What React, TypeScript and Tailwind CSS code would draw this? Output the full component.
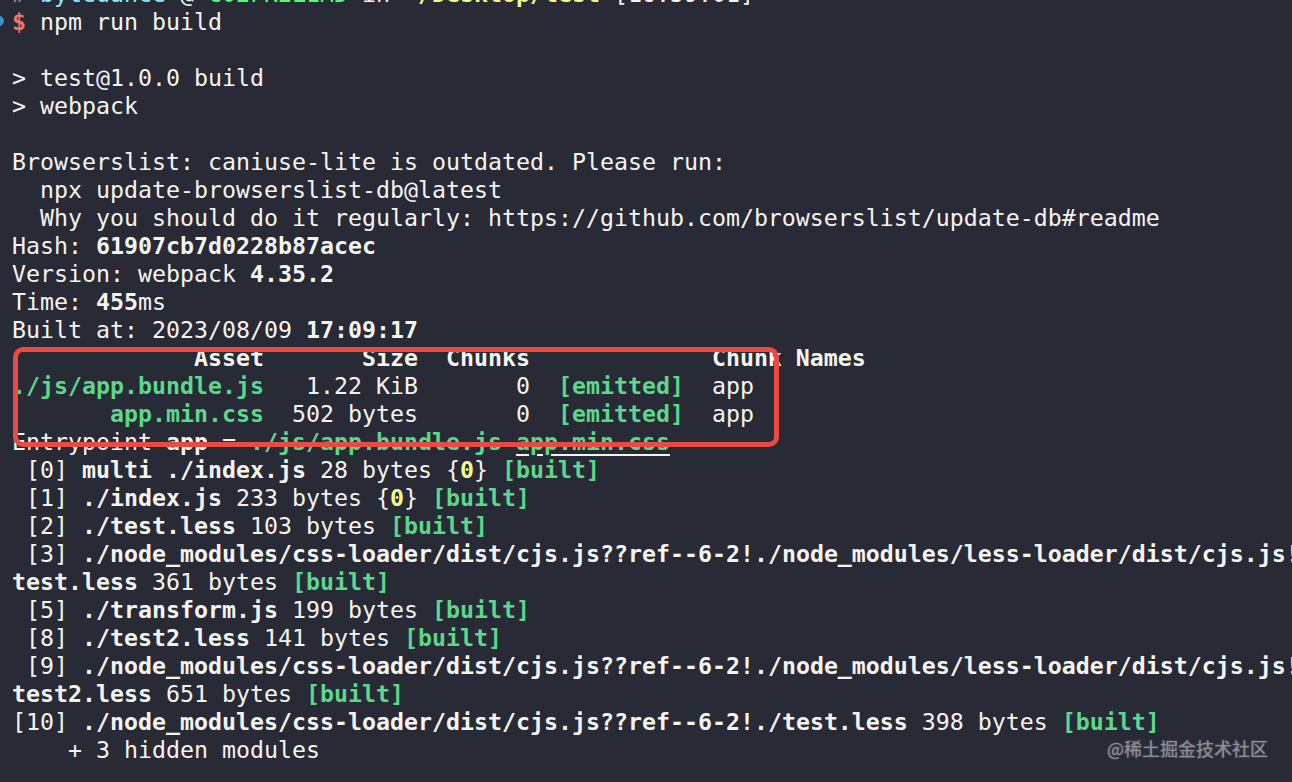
import type { ReactNode } from 'react';

// Terminal palette (close to Dracula)
const GREEN = 'font-bold text-[#5ad88b]';

function B({ children }: { children: ReactNode }) {
  return <span className="font-bold">{children}</span>;
}

function G({ children }: { children: ReactNode }) {
  return <span className={GREEN}>{children}</span>;
}

function Built() {
  return <G>[built]</G>;
}

function Chunk0() {
  return (
    <>
      {'{'}
      <span className="font-bold text-[#f1fa8c]">0</span>
      {'}'}
    </>
  );
}

const LINES: ReactNode[] = [
  <>
    <span className="text-[#8a8fa8]">#</span>{' '}
    <span className="text-[#8be9fd]">bytedance</span> @{' '}
    <span className="text-[#50fa7b]">C02FK2L1MD</span> in{' '}
    <span className="font-bold text-[#f1fa8c]">~/Desktop/test</span> [16:59:01]
  </>,
  <>
    <span className="font-bold text-[#f2736b]">$</span> npm run build
  </>,
  '',
  '> test@1.0.0 build',
  '> webpack',
  '',
  'Browserslist: caniuse-lite is outdated. Please run:',
  '  npx update-browserslist-db@latest',
  '  Why you should do it regularly: https://github.com/browserslist/update-db#readme',
  <>
    Hash: <B>61907cb7d0228b87acec</B>
  </>,
  <>
    Version: webpack <B>4.35.2</B>
  </>,
  <>
    Time: <B>455</B>ms
  </>,
  <>
    Built at: 2023/08/09 <B>17:09:17</B>
  </>,
  <B>{'             Asset       Size  Chunks             Chunk Names'}</B>,
  <>
    <G>./js/app.bundle.js</G>
    {'   1.22 KiB       0  '}
    <G>[emitted]</G>
    {'  app'}
  </>,
  <>
    {'       '}
    <G>app.min.css</G>
    {'  502 bytes       0  '}
    <G>[emitted]</G>
    {'  app'}
  </>,
  <>
    Entrypoint <B>app</B> = <G>./js/app.bundle.js</G>{' '}
    <span className="font-bold text-[#5ad88b] underline decoration-[#f4f4ef] underline-offset-4">app.min.css</span>
  </>,
  <>
    {' [0] '}
    <B>multi ./index.js</B> 28 bytes <Chunk0 /> <Built />
  </>,
  <>
    {' [1] '}
    <B>./index.js</B> 233 bytes <Chunk0 /> <Built />
  </>,
  <>
    {' [2] '}
    <B>./test.less</B> 103 bytes <Built />
  </>,
  <>
    {' [3] '}
    <B>./node_modules/css-loader/dist/cjs.js??ref--6-2!./node_modules/less-loader/dist/cjs.js!</B>
  </>,
  <>
    <B>test.less</B> 361 bytes <Built />
  </>,
  <>
    {' [5] '}
    <B>./transform.js</B> 199 bytes <Built />
  </>,
  <>
    {' [8] '}
    <B>./test2.less</B> 141 bytes <Built />
  </>,
  <>
    {' [9] '}
    <B>./node_modules/css-loader/dist/cjs.js??ref--6-2!./node_modules/less-loader/dist/cjs.js!</B>
  </>,
  <>
    <B>test2.less</B> 651 bytes <Built />
  </>,
  <>
    {'[10] '}
    <B>./node_modules/css-loader/dist/cjs.js??ref--6-2!./test.less</B> 398 bytes <Built />
  </>,
  '    + 3 hidden modules',
];

export default function App() {
  return (
    <div className="relative h-[782px] w-[1292px] overflow-hidden bg-[#282a36] font-['DejaVu_Sans_Mono',monospace] text-[23.25px] leading-[28px] text-[#f4f4ef]">
      <div className="-mt-[20px] pl-[12px]">
        {LINES.map((line, i) => (
          <div key={i} className="h-[28px] whitespace-pre">
            {line}
          </div>
        ))}
      </div>

      {/* iTerm command mark */}
      <div className="absolute left-[-6px] top-[16px] h-[10px] w-[10px] rounded-full bg-[#3d8fcf]" />

      {/* annotation box drawn over the asset table */}
      <div className="absolute left-[13px] top-[347px] h-[100px] w-[766px] rounded-[10px] border-[5px] border-[#e94a44]" />

      <div className="absolute right-[24px] top-[735px] font-['Noto_Sans_CJK_SC',sans-serif] text-[18px] leading-[26px] text-[#8e9096] [text-shadow:0_0_2px_rgba(255,255,255,0.35)]">
        @稀土掘金技术社区
      </div>
    </div>
  );
}
